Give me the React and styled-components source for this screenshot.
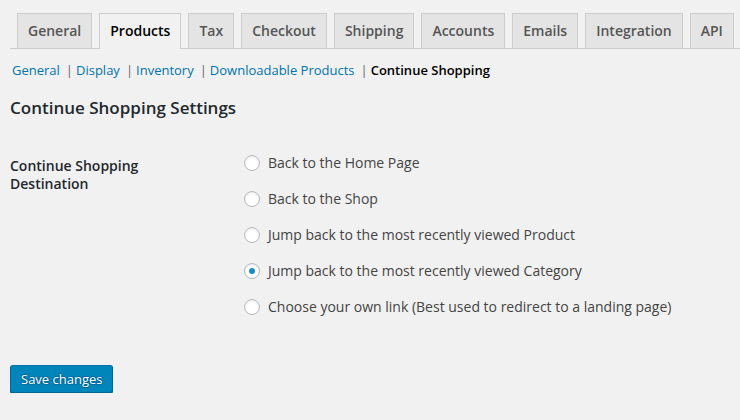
import React, { useState } from "react";
import styled, { createGlobalStyle } from "styled-components";

const Global = createGlobalStyle`
  html, body { margin: 0; padding: 0; background: #f1f1f1; }
  body { font-family: "Open Sans", "Liberation Sans", sans-serif; color: #444; font-size: 13px; }
`;

const Wrap = styled.div`
  padding: 13px 0 0 10px;
  overflow: hidden;
  width: 730px;
`;

const TabBar = styled.nav`
  display: flex;
  border-bottom: 1px solid #ccc;
  padding-left: 7px;
  gap: 7px;
  white-space: nowrap;
`;

const Tab = styled.a`
  display: block;
  padding: 5px 10px;
  line-height: 24px;
  font-size: 14px;
  font-weight: 600;
  border: 1px solid #ccc;
  border-bottom: none;
  margin-bottom: ${(p) => (p.$active ? "-1px" : "0")};
  padding-bottom: ${(p) => (p.$active ? "6px" : "5px")};
  background: ${(p) => (p.$active ? "#f1f1f1" : "#e4e4e4")};
  color: ${(p) => (p.$active ? "#000" : "#555")};
  text-decoration: none;
`;

const SubNav = styled.ul`
  list-style: none;
  margin: 8px 0 0 2px;
  padding: 0;
  display: flex;
  font-size: 13px;
  line-height: 26px;
`;

const SubItem = styled.li`
  white-space: nowrap;
`;

const Sep = styled.span`
  color: #666;
  margin: 0 3px 0 6px;
`;

const SubLink = styled.a`
  color: ${(p) => (p.$current ? "#000" : "#0073aa")};
  font-weight: ${(p) => (p.$current ? 600 : 400)};
  text-decoration: none;
`;

const Heading = styled.h2`
  margin: 13px 0 0;
  font-size: 17px;
  line-height: 24px;
  font-weight: 600;
  color: #23282d;
`;

const FormRow = styled.div`
  display: grid;
  grid-template-columns: 234px 1fr;
  margin-top: 33px;
`;

const Label = styled.div`
  font-size: 14px;
  font-weight: 600;
  line-height: 18px;
  color: #23282d;
  padding-top: 4px;
`;

const RadioList = styled.div`
  display: flex;
  flex-direction: column;
  gap: 16px;
`;

const RadioRow = styled.label`
  display: flex;
  align-items: center;
  gap: 8px;
  font-size: 14px;
  line-height: 20px;
  color: #444;
  cursor: pointer;
`;

const RadioCircle = styled.span`
  width: 16px;
  height: 16px;
  box-sizing: border-box;
  border-radius: 50%;
  border: 1px solid #b4b9be;
  background: #fff;
  box-shadow: inset 0 1px 2px rgba(0, 0, 0, 0.1);
  display: flex;
  align-items: center;
  justify-content: center;
  flex: none;
  &::before {
    content: "";
    width: 6px;
    height: 6px;
    border-radius: 50%;
    background: #1e8cbe;
    display: ${(p) => (p.$checked ? "block" : "none")};
  }
`;

const Button = styled.button`
  margin-top: 48px;
  height: 28px;
  padding: 0 10px 1px;
  font-family: "Open Sans", "Liberation Sans", sans-serif;
  font-size: 13px;
  line-height: 26px;
  color: #fff;
  background: #0085ba;
  border: 1px solid;
  border-color: #0073aa #006799 #006799;
  border-radius: 3px;
  box-shadow: 0 1px 0 #006799;
  text-shadow: 0 -1px 1px #006799, 1px 0 1px #006799, 0 1px 1px #006799, -1px 0 1px #006799;
  cursor: pointer;
`;

const tabs = ["General", "Products", "Tax", "Checkout", "Shipping", "Accounts", "Emails", "Integration", "API"];
const subs = ["General", "Display", "Inventory", "Downloadable Products", "Continue Shopping"];
const options = [
  "Back to the Home Page",
  "Back to the Shop",
  "Jump back to the most recently viewed Product",
  "Jump back to the most recently viewed Category",
  "Choose your own link (Best used to redirect to a landing page)",
];

export default function App() {
  const [sel, setSel] = useState(3);
  return (
    <>
      <Global />
      <Wrap>
        <TabBar>
          {tabs.map((t) => (
            <Tab key={t} $active={t === "Products"}>{t}</Tab>
          ))}
        </TabBar>
        <SubNav>
          {subs.map((s, i) => (
            <SubItem key={s}>
              <SubLink $current={i === subs.length - 1}>{s}</SubLink>
              {i < subs.length - 1 && <Sep>|</Sep>}
            </SubItem>
          ))}
        </SubNav>
        <Heading>Continue Shopping Settings</Heading>
        <FormRow>
          <Label>Continue Shopping<br />Destination</Label>
          <RadioList>
            {options.map((o, i) => (
              <RadioRow key={o} onClick={() => setSel(i)}>
                <RadioCircle $checked={sel === i} />
                {o}
              </RadioRow>
            ))}
          </RadioList>
        </FormRow>
        <Button>Save changes</Button>
      </Wrap>
    </>
  );
}
